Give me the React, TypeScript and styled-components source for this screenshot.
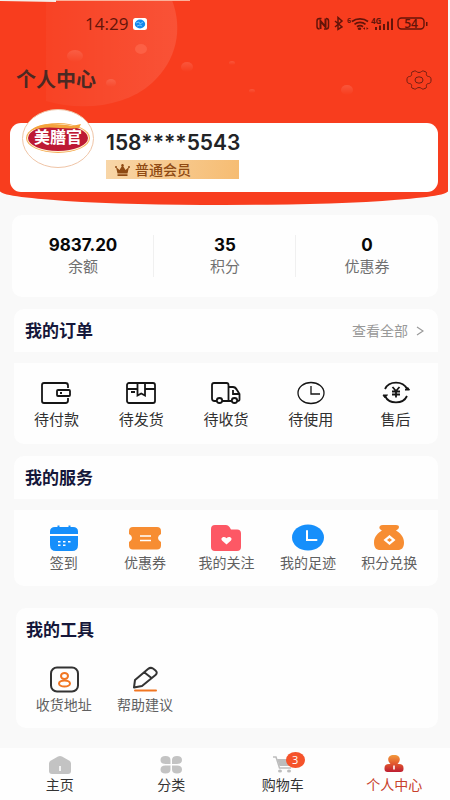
import React from "react";
import styled, { createGlobalStyle, css } from "styled-components";

const GlobalStyle = createGlobalStyle`
  *, *::before, *::after { box-sizing: border-box; }
  body {
    margin: 0;
    background: #f9f9f9;
    font-family: "Noto Sans", "Noto Sans CJK SC", sans-serif;
    color: #333;
  }
  button { font: inherit; border: 0; background: none; padding: 0; color: inherit; cursor: pointer; }
  a { color: inherit; text-decoration: none; }
  h1, h2, p, dl, dd, dt { margin: 0; }
  svg { display: block; flex: none; }
`;

const Page = styled.div`
  min-height: 100vh;
  display: flex;
  flex-direction: column;
`;

const Header = styled.header`
  position: relative;
  overflow: hidden;
  margin-right: 2px;
  padding: 14px 10px 13px;
  background: #f83d1e;
  border-radius: 0 0 50% 50% / 0 0 14px 14px;
`;

const Backdrop = styled.svg`
  position: absolute;
  inset: 0 auto auto 0;
`;

const StatusBar = styled.div`
  position: relative;
  display: flex;
  align-items: center;
  justify-content: space-between;
  height: 20px;
  padding: 0 9px 0 75px;
`;

const Clock = styled.div`
  display: flex;
  align-items: center;
  gap: 5px;
  font: 500 17px/20px "Open Sans", sans-serif;
  color: #641409;
`;

const TitleRow = styled.div`
  position: relative;
  display: flex;
  align-items: center;
  justify-content: space-between;
  height: 28px;
  margin-top: 32px;
  padding: 0 6px;
`;

const Title = styled.h1`
  font-size: 20px;
  line-height: 28px;
  font-weight: 700;
  color: #4b2923;
`;

const Profile = styled.section`
  position: relative;
  display: flex;
  align-items: flex-start;
  gap: 12px;
  height: 69px;
  margin-top: 29px;
  padding: 0 12px;
  background: #fff;
  border-radius: 11px;
`;

const Avatar = styled.div`
  margin-top: -14px;
`;

const Account = styled.div`
  padding-top: 7px;
`;

const Phone = styled.p`
  font: 600 21px/26px Inter, sans-serif;
  color: #222326;
`;

const Level = styled.div`
  display: flex;
  align-items: center;
  gap: 5px;
  width: 133px;
  height: 19px;
  margin-top: 4px;
  padding-left: 9px;
  background: linear-gradient(100deg, #f8d6a8, #f6bc72);
  color: #8f4a13;
  font-size: 14px;
  line-height: 19px;
  font-weight: 500;
`;

const Content = styled.main`
  flex: 1;
  display: flex;
  flex-direction: column;
  gap: 12px;
  padding: 10px 12px 20px 14px;
`;

const card = css`
  background: #fefefe;
`;

const Stats = styled.dl`
  ${card}
  display: grid;
  grid-template-columns: repeat(3, 1fr);
  height: 82px;
  margin-left: -2px;
  padding: 20px 0 0;
  border-radius: 10px;
`;

const Stat = styled.div`
  display: flex;
  flex-direction: column-reverse;
  justify-content: flex-end;
  align-items: center;
  height: 42px;
  & + & { box-shadow: -1px 0 #f0f0f0; }
  dd { font: 700 17px/20px Inter, sans-serif; color: #080808; }
  dt { font-size: 15px; line-height: 22px; color: #707070; }
`;

const SectionHead = styled.div`
  ${card}
  display: flex;
  align-items: center;
  justify-content: space-between;
  height: 43px;
  padding: 0 14px 0 11px;
  border-radius: 10px 10px 0 0;
`;

const SectionTitle = styled.h2`
  font-size: 17px;
  line-height: 24px;
  font-weight: 700;
  color: #15173a;
`;

const ViewAll = styled.a`
  display: flex;
  align-items: center;
  gap: 8px;
  font-size: 14px;
  line-height: 20px;
  color: #999;
`;

const Panel = styled.div<{ $inset?: boolean }>`
  ${card}
  display: grid;
  grid-template-columns: repeat(5, 1fr);
  padding: ${(p) => (p.$inset ? "12px 8px 12px 9px" : "15px 0 14px")};
  border-radius: 0 0 10px 10px;
`;

const Entry = styled.button<{ $strong?: boolean }>`
  display: flex;
  flex-direction: column;
  align-items: center;
  font-size: ${(p) => (p.$strong ? "15px" : "14px")};
  line-height: 22px;
  color: ${(p) => (p.$strong ? "#303030" : "#606060")};
  white-space: nowrap;
`;

const Group = styled.section<{ $after?: number }>`
  display: flex;
  flex-direction: column;
  gap: 11px;
  margin-bottom: ${(p) => p.$after ?? 0}px;
`;

const Tools = styled.section`
  ${card}
  margin-left: 2px;
  padding: 10px 0 0;
  border-radius: 10px;
  ${SectionTitle} { padding-left: 10px; }
  ${Panel} { padding-top: 22px; margin-left: -2px; background: none; }
`;

const TabBar = styled.nav`
  display: grid;
  grid-template-columns: repeat(4, 1fr);
  height: 52px;
  padding: 6px 0 0 4px;
  background: #fefefe;
`;

const Tab = styled.a<{ $active?: boolean }>`
  display: flex;
  flex-direction: column;
  align-items: center;
  font-size: 14px;
  line-height: 20px;
  color: ${(p) => (p.$active ? "#c8402b" : "#333")};
`;

const TabIcon = styled.span`
  position: relative;
  display: flex;
`;

const Badge = styled.span`
  position: absolute;
  top: -2px;
  left: 15px;
  width: 19px;
  height: 16px;
  border-radius: 50%;
  background: #f5532b;
  color: #fff;
  font: 11px/16px "Open Sans", sans-serif;
  text-align: center;
`;

const HeaderBackdrop = () => (
  <Backdrop width="360" height="120" aria-hidden="true">
    <defs>
      <linearGradient id="disc" x1="0" x2="1" y1="0" y2="0">
        <stop offset="0" stopColor="#fff" stopOpacity="0.03" />
        <stop offset="1" stopColor="#fff" stopOpacity="0.11" />
      </linearGradient>
      <linearGradient id="drop" x1="0" x2="0" y1="0" y2="1">
        <stop offset="0" stopColor="#fff" stopOpacity="0.13" />
        <stop offset="1" stopColor="#fff" stopOpacity="0" />
      </linearGradient>
    </defs>
    <path d="M46 0H172C183 29 177 60 152 83C127 106 83 112 46 101Z" fill="url(#disc)" />
    <path d="M0 0H56V2L0 1Z" fill="#f4eee9" />
    <path d="M56 0H190V1H56Z" fill="#fbb09a" />
    <ellipse cx="141" cy="49" rx="6" ry="5" fill="#ff7258" opacity=".5" />
    <g fill="url(#drop)">
      <ellipse cx="75" cy="56" rx="8" ry="6" />
      <ellipse cx="187" cy="67" rx="6" ry="5" />
      <ellipse cx="111" cy="83" rx="5" ry="4" />
      <ellipse cx="232" cy="63" rx="3" ry="2" />
      <ellipse cx="252" cy="91" rx="3" ry="2" />
      <ellipse cx="347" cy="90" rx="6" ry="5" />
    </g>
  </Backdrop>
);

const AppMark = () => (
  <svg width="14" height="12" viewBox="0 0 14 12" aria-hidden="true">
    <rect width="14" height="12" rx="2.5" fill="#fff" />
    <ellipse cx="7" cy="6" rx="5.2" ry="4.4" fill="#1689ee" />
    <path d="M3 5l3-1 1 2 3-2M4 8l3-1 2 1" stroke="#8bd2ff" strokeWidth=".8" fill="none" />
  </svg>
);

const StatusIcons = () => (
  <svg width="113" height="16" viewBox="0 0 113 16" role="img" aria-label="NFC 蓝牙 WiFi 4G 电量54">
    <g fill="none" stroke="#641409">
      <path d="M5.500 2.500H3.500Q1 2.500 1 5v5.500Q1 13 3.500 13M8 13h2q2.500 0 2.500-2.500V5q0-2.500-2.500-2.500" strokeWidth="1.5" />
      <path d="M4.500 13V5l5 6V2.500" strokeWidth="2" />
      <path d="M19 5l7 6-4 2.500V1.500L26 5l-7 6" strokeWidth="1.5" />
      <path d="M36 5.500c4.500-3.500 11.500-3.500 16 0M38.500 8.300c3-2.500 8-2.500 11 0M41 10.800c2-1.500 4-1.500 6 0" strokeWidth="1.7" />
      <rect x="82" y="2" width="26" height="11" rx="3.500" strokeWidth="1.400" />
    </g>
    <g fill="#641409">
      <ellipse cx="43.500" cy="12.700" rx="1.800" ry="1.300" />
      <path d="M47 12.500l2-1.300v2.600zM52.500 12.500l-2-1.300v2.600z" />
      <path d="M59 11h2v3h-2zM63 9.500h2V14h-2zM67 8h2v6h-2zM71 5.500h2V14h-2zM75 2.500h2V14h-2zM110 6h1.500v4H110z" />
      <text x="31" y="7" fontSize="7" fontWeight="700" fontFamily="Open Sans, sans-serif">6</text>
      <text x="55" y="8" fontSize="8" fontWeight="700" fontFamily="Open Sans, sans-serif">4G</text>
      <text x="95" y="12" fontSize="12" fontWeight="600" textAnchor="middle" fontFamily="Open Sans, sans-serif">54</text>
    </g>
  </svg>
);

const GearIcon = () => (
  <svg width="26" height="20" viewBox="0 0 26 20" fill="none" stroke="#702014" strokeWidth="1" aria-hidden="true">
    <path d="M8.500 1C10.500.5 10.500 2.500 13 2.500S15.500.5 17.500 1l2.500 1c1.300.8-.2 2.200.6 3.500.7 1.200 3.200.8 4 2 .6 1.200.6 3.800 0 5-.8 1.200-3.300.8-4 2-.8 1.300.7 2.700-.6 3.500l-2.500 1c-2 .5-2-1.500-4.500-1.500S10.500 19.500 8.500 19L6 18c-1.300-.8.2-2.200-.6-3.500-.7-1.200-3.200-.8-4-2-.6-1.200-.6-3.800 0-5 .8-1.200 3.300-.8 4-2C6.200 4.200 4.700 2.800 6 2z" />
    <ellipse cx="13" cy="10" rx="4" ry="3.200" />
  </svg>
);

const Logo = () => (
  <svg width="72" height="59" viewBox="0 0 72 59" role="img" aria-label="美膳官">
    <ellipse cx="36" cy="29.500" rx="35.500" ry="29" fill="#fff" stroke="#efc4a6" />
    <ellipse cx="36" cy="29" rx="32" ry="15" fill="#f5ad54" />
    <ellipse cx="36" cy="29" rx="31" ry="14" fill="#fff3d8" />
    <ellipse cx="36" cy="29" rx="30" ry="13" fill="#bd1933" />
    <path d="M8 22C17 12 38 15 50 17l9-2-2 4c-17 2-32-4-49 3z" fill="#f4a33c" />
    <text x="36" y="34" textAnchor="middle" fill="#fff" fontSize="16" fontWeight="700" fontFamily="Noto Sans CJK SC, sans-serif">美膳官</text>
  </svg>
);

const CrownIcon = () => (
  <svg width="15" height="12" viewBox="0 0 15 12" fill="#8f4a13" aria-hidden="true">
    <path d="M1 3l3.500 3L7.500 1l3 5L14 3l-1.500 6.500h-10zM2.500 10.300h10V12h-10z" />
    <circle cx="1" cy="3" r="1" /><circle cx="7.500" cy="1.200" r="1.200" /><circle cx="14" cy="3" r="1" />
  </svg>
);

const line = { fill: "none", stroke: "#151515", strokeWidth: 1.8, "aria-hidden": true } as const;

const WalletIcon = () => (
  <svg width="32" height="30" viewBox="0 0 32 30" {...line}>
    <path d="M28 10V7.500Q28 5 25.500 5H4Q2 5 2 7v16q0 2 2 2h21.500q2.500 0 2.500-2.500V20" />
    <rect x="17" y="12" width="13" height="6" rx="1" />
    <path d="M20 15h2" />
  </svg>
);

const PackageIcon = () => (
  <svg width="32" height="30" viewBox="0 0 32 30" {...line}>
    <rect x="2" y="5" width="28" height="20" rx="2" />
    <path d="M2 11h10.500M20 11h10M12.500 5v12.500l3.700-2 3.800 2V5M6 14h4" />
  </svg>
);

const TruckIcon = () => (
  <svg width="32" height="30" viewBox="0 0 32 30" {...line}>
    <path d="M7 23H4.500Q2 23 2 20.500V7Q2 5 4 5h12.500q2 0 2 2v16H12M18.500 9H23q2.500 0 4 3l2.500 4v5.500q0 1.500-2 1.500M22 23h-3.500M23 12v4h6" />
    <ellipse cx="9.500" cy="22.500" rx="2.700" ry="2.500" />
    <ellipse cx="24.500" cy="22.500" rx="2.700" ry="2.500" />
  </svg>
);

const ClockIcon = () => (
  <svg width="32" height="30" viewBox="0 0 32 30" {...line} strokeWidth={1.3}>
    <ellipse cx="16" cy="15" rx="13" ry="10.500" />
    <path d="M16 8v8h9" />
  </svg>
);

const RefundIcon = () => (
  <svg width="32" height="30" viewBox="0 0 32 30" {...line}>
    <path d="M5 11C9 2.500 23 2.500 27 11M27 18c-4 8.500-18 8.500-22 0" />
    <path d="M25 12h4.500L28 9.500zM7.500 17H3l1.500 2.500z" fill="#151515" strokeWidth="1" />
    <path d="M12.500 9l3.500 4 3.500-4M12 13.500h8M12 16.500h8M16 13v6.500" />
  </svg>
);

const CalendarIcon = () => (
  <svg width="32" height="30" viewBox="0 0 32 30" fill="#168ffb" aria-hidden="true">
    <path d="M2 12V9.500Q2 5 7 5h2.500V3.500h2V5h9V3.500h2V5H25q5 0 5 4.500V12zM2 14h28v9q0 6-6 6H8q-6 0-6-6z" />
    <path d="M10 19h2.500v1.500H10zM15 19h2.500v1.500H15zM20 19h2.500v1.500H20zM10 22.500h2.500V24H10zM15 22.500h2.500V24H15z" fill="#fff" />
  </svg>
);

const CouponIcon = () => (
  <svg width="34" height="30" viewBox="0 0 34 30" aria-hidden="true">
    <path d="M5 5h24q4 0 4 4v3q-3 1.500-3 4t3 4v3.500q0 4-4 4H5q-4 0-4-4V20q3-1.500 3-4t-3-4V9q0-4 4-4z" fill="#f78d32" />
    <path d="M12 14h11M12 18.500h11" stroke="#fff" strokeWidth="1.600" />
  </svg>
);

const FollowIcon = () => (
  <svg width="32" height="30" viewBox="0 0 32 30" aria-hidden="true">
    <path d="M5 3h11q2 0 3.500 2l1.500 2.500h6q4 0 4 4V25q0 4-4 4H5q-4 0-4-4V7q0-4 4-4z" fill="#fd5865" />
    <path d="M16.500 22.500l-4.500-4c-2-2.500 2-5 4.500-2.200 2.500-2.800 6.500-.3 4.500 2.200z" fill="#fff" />
  </svg>
);

const FootprintIcon = () => (
  <svg width="34" height="30" viewBox="0 0 34 30" aria-hidden="true">
    <ellipse cx="17" cy="15.500" rx="16" ry="13" fill="#168ffb" />
    <path d="M16 9v9h9.500" stroke="#fff" strokeWidth="2" fill="none" strokeLinecap="round" />
  </svg>
);

const BagIcon = () => (
  <svg width="32" height="30" viewBox="0 0 32 30" aria-hidden="true">
    <path d="M10 3h13q3 0 3 2.300 0 1.700-3 3.200c4 2.500 8 6 8 12 0 5-2 7.500-6.500 7.500h-17C3 28 1 25.500 1 20.500c0-6 4-9.500 8-12-3-1.500-3-3.200-2-4.500Q7.800 3 10 3z" fill="#f78d32" />
    <path d="M16.500 13l6 5-6 5-6-5z" fill="#fff" />
    <path d="M16.500 16l2.500 2-2.500 2-2.500-2z" fill="#f78d32" />
  </svg>
);

const AddressIcon = () => (
  <svg width="32" height="30" viewBox="0 0 32 30" fill="none" aria-hidden="true">
    <rect x="3" y="3.500" width="27" height="24" rx="6" stroke="#333" strokeWidth="2" />
    <ellipse cx="16.500" cy="12" rx="3.500" ry="3" stroke="#f17622" strokeWidth="2" />
    <ellipse cx="16.500" cy="19.500" rx="5.500" ry="3" stroke="#f17622" strokeWidth="2" />
  </svg>
);

const PencilIcon = () => (
  <svg width="32" height="30" viewBox="0 0 32 30" fill="none" aria-hidden="true">
    <path d="M5 23.500l1-7.500L19 5q2.500-2 5-.5l2.500 2q2.500 2 0 4.500L13 22zM15.500 8.500l7 5.500" stroke="#333" strokeWidth="2" strokeLinejoin="round" />
    <path d="M6 26.500h21" stroke="#f17622" strokeWidth="2" strokeLinecap="round" />
  </svg>
);

const HomeIcon = () => (
  <svg width="24" height="21" viewBox="0 0 24 21" aria-hidden="true">
    <path d="M10 2.500q2-1 4 0l7 4q2 1.200 2 3V17q0 3-3 3H4q-3 0-3-3V9.500q0-1.800 2-3z" fill="#c3c3c3" />
    <path d="M12 12v5" stroke="#fff" strokeWidth="1.600" />
  </svg>
);

const CategoryIcon = () => (
  <svg width="24" height="21" viewBox="0 0 24 21" fill="#c3c3c3" aria-hidden="true">
    <path d="M11.500 10H6.500Q1.500 10 1.500 6T6.500 2t5 4zM13 10h5q5 0 5-4t-5-4-5 4zM11.500 11.500H6.500q-5 0-5 4t5 4 5-4zM13 11.500h5q5 0 5 4t-5 4-5-4z" />
  </svg>
);

const CartIcon = () => (
  <svg width="24" height="21" viewBox="0 0 24 21" fill="#bdbdbd" aria-hidden="true">
    <path d="M2 3h3l3.500 11H20" fill="none" stroke="#bdbdbd" strokeWidth="1.500" />
    <path d="M6 5h15l-2 7H8.500z" />
    <ellipse cx="9" cy="17" rx="2" ry="1.600" /><ellipse cx="18" cy="17" rx="2" ry="1.600" />
  </svg>
);

const PersonIcon = () => (
  <svg width="24" height="21" viewBox="0 0 24 21" aria-hidden="true">
    <defs>
      <linearGradient id="person" x1="0" x2="0" y1="0" y2="1">
        <stop offset="0" stopColor="#f29a3c" />
        <stop offset=".5" stopColor="#e2592f" />
        <stop offset="1" stopColor="#bd1d31" />
      </linearGradient>
    </defs>
    <path d="M12 1c7 0 7 6 3.500 9H17q4.500 0 4.500 4v1q0 3-3 3h-13q-3 0-3-3v-1q0-4 4.500-4h1.500C5 7 5 1 12 1z" fill="url(#person)" />
    <path d="M12 11.500v4" stroke="#fff" strokeWidth="1.600" />
  </svg>
);

const stats = [
  { label: "余额", value: "9837.20" },
  { label: "积分", value: "35" },
  { label: "优惠券", value: "0" },
];

const orders = [
  { label: "待付款", Icon: WalletIcon },
  { label: "待发货", Icon: PackageIcon },
  { label: "待收货", Icon: TruckIcon },
  { label: "待使用", Icon: ClockIcon },
  { label: "售后", Icon: RefundIcon },
];

const services = [
  { label: "签到", Icon: CalendarIcon },
  { label: "优惠券", Icon: CouponIcon },
  { label: "我的关注", Icon: FollowIcon },
  { label: "我的足迹", Icon: FootprintIcon },
  { label: "积分兑换", Icon: BagIcon },
];

const tools = [
  { label: "收货地址", Icon: AddressIcon },
  { label: "帮助建议", Icon: PencilIcon },
];

const tabs = [
  { label: "主页", Icon: HomeIcon },
  { label: "分类", Icon: CategoryIcon },
  { label: "购物车", Icon: CartIcon, badge: 3 },
  { label: "个人中心", Icon: PersonIcon, active: true },
];

export default function App() {
  return (
    <Page lang="zh-CN">
      <GlobalStyle />
      <Header>
        <HeaderBackdrop />
        <StatusBar>
          <Clock>14:29<AppMark /></Clock>
          <StatusIcons />
        </StatusBar>
        <TitleRow>
          <Title>个人中心</Title>
          <button type="button" aria-label="设置"><GearIcon /></button>
        </TitleRow>
        <Profile>
          <Avatar><Logo /></Avatar>
          <Account>
            <Phone>158****5543</Phone>
            <Level><CrownIcon />普通会员</Level>
          </Account>
        </Profile>
      </Header>
      <Content>
        <Stats>
          {stats.map((s) => (
            <Stat key={s.label}><dt>{s.label}</dt><dd>{s.value}</dd></Stat>
          ))}
        </Stats>
        <Group>
          <SectionHead>
            <SectionTitle>我的订单</SectionTitle>
            <ViewAll href="#orders">
              查看全部
              <svg width="8" height="10" viewBox="0 0 8 10" fill="none" stroke="#999" strokeWidth="1.200" aria-hidden="true"><path d="M1 1l6 4-6 4" /></svg>
            </ViewAll>
          </SectionHead>
          <Panel>
            {orders.map(({ label, Icon }) => (
              <Entry key={label} type="button" $strong><Icon />{label}</Entry>
            ))}
          </Panel>
        </Group>
        <Group $after={10}>
          <SectionHead><SectionTitle>我的服务</SectionTitle></SectionHead>
          <Panel $inset>
            {services.map(({ label, Icon }) => (
              <Entry key={label} type="button"><Icon />{label}</Entry>
            ))}
          </Panel>
        </Group>
        <Tools>
          <SectionTitle>我的工具</SectionTitle>
          <Panel $inset>
            {tools.map(({ label, Icon }) => (
              <Entry key={label} type="button"><Icon />{label}</Entry>
            ))}
          </Panel>
        </Tools>
      </Content>
      <TabBar>
        {tabs.map(({ label, Icon, badge, active }) => (
          <Tab key={label} href={`#${label}`} $active={active} aria-current={active ? "page" : undefined}>
            <TabIcon><Icon />{badge && <Badge>{badge}</Badge>}</TabIcon>
            {label}
          </Tab>
        ))}
      </TabBar>
    </Page>
  );
}
